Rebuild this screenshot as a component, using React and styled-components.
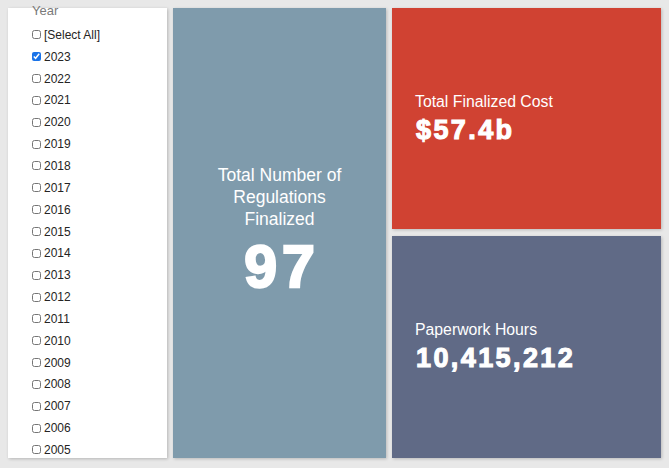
import React from "react";
import styled, { createGlobalStyle } from "styled-components";

const Global = createGlobalStyle`
  html, body { margin: 0; padding: 0; background: #e8e8e8; }
  body { font-family: "Liberation Sans", Arial, sans-serif; }
`;

const Page = styled.div`
  width: 669px;
  height: 468px;
  box-sizing: border-box;
  padding: 8px 8px 10px 8px;
  display: grid;
  grid-template-columns: 159px 213px 269px;
  column-gap: 6px;
  background: #e8e8e8;
`;

const SlicerPanel = styled.div`
  background: #ffffff;
  box-shadow: 1px 1px 3px rgba(0, 0, 0, 0.22);
  padding-left: 24px;
  display: flex;
  flex-direction: column;
  min-height: 0;
`;

const SlicerTitle = styled.div`
  font-size: 13px;
  line-height: 14px;
  color: #7a7a7a;
  margin-top: -4px;
  margin-bottom: 6px;
`;

const List = styled.div`
  flex: 1;
  overflow: hidden;
  display: flex;
  flex-direction: column;
`;

const Row = styled.label`
  display: flex;
  align-items: center;
  height: 21.85px;
  flex-shrink: 0;
  font-size: 12px;
  color: #252423;
`;

const Box = styled.input`
  width: 9px;
  height: 9px;
  margin: 0 3px 0 0;
  accent-color: #1a73e8;
`;

const Card = styled.div`
  background: ${(p) => p.$bg};
  box-shadow: 1px 1px 3px rgba(0, 0, 0, 0.2);
  color: #ffffff;
  display: flex;
  flex-direction: column;
  justify-content: center;
  align-items: ${(p) => (p.$center ? "center" : "flex-start")};
  text-align: ${(p) => (p.$center ? "center" : "left")};
  padding: ${(p) => (p.$center ? "0 20px 4px" : "0 0 0 23px")};
  box-sizing: border-box;
`;

const RightColumn = styled.div`
  display: grid;
  grid-template-rows: 221px 222px;
  row-gap: 7px;
`;

const BigLabel = styled.div`
  font-size: 17.5px;
  line-height: 21.7px;
`;

const BigValue = styled.div`
  font-size: 59px;
  font-weight: 700;
  line-height: 60px;
  letter-spacing: 5px;
  margin-right: -5px;
  -webkit-text-stroke: 2.4px #ffffff;
  margin-top: 6px;
`;

const Label = styled.div`
  font-size: 15.8px;
  line-height: 18px;
`;

const Value = styled.div`
  font-size: 27px;
  font-weight: 700;
  line-height: 30px;
  letter-spacing: 2.4px;
  -webkit-text-stroke: 1.1px #ffffff;
  margin-left: 1px;
  margin-top: 4px;
`;

const years = [
  2023, 2022, 2021, 2020, 2019, 2018, 2017, 2016, 2015, 2014, 2013, 2012,
  2011, 2010, 2009, 2008, 2007, 2006, 2005,
];

export default function App() {
  return (
    <>
      <Global />
      <Page>
        <SlicerPanel>
          <SlicerTitle>Year</SlicerTitle>
          <List>
            <Row>
              <Box type="checkbox" readOnly />
              [Select All]
            </Row>
            {years.map((y) => (
              <Row key={y}>
                <Box type="checkbox" defaultChecked={y === 2023} />
                {y}
              </Row>
            ))}
          </List>
        </SlicerPanel>
        <Card $bg="#7f9bac" $center>
          <BigLabel>
            Total Number of
            <br />
            Regulations
            <br />
            Finalized
          </BigLabel>
          <BigValue>97</BigValue>
        </Card>
        <RightColumn>
          <Card $bg="#d04232">
            <Label>Total Finalized Cost</Label>
            <Value>$57.4b</Value>
          </Card>
          <Card $bg="#606a86">
            <Label>Paperwork Hours</Label>
            <Value>10,415,212</Value>
          </Card>
        </RightColumn>
      </Page>
    </>
  );
}
